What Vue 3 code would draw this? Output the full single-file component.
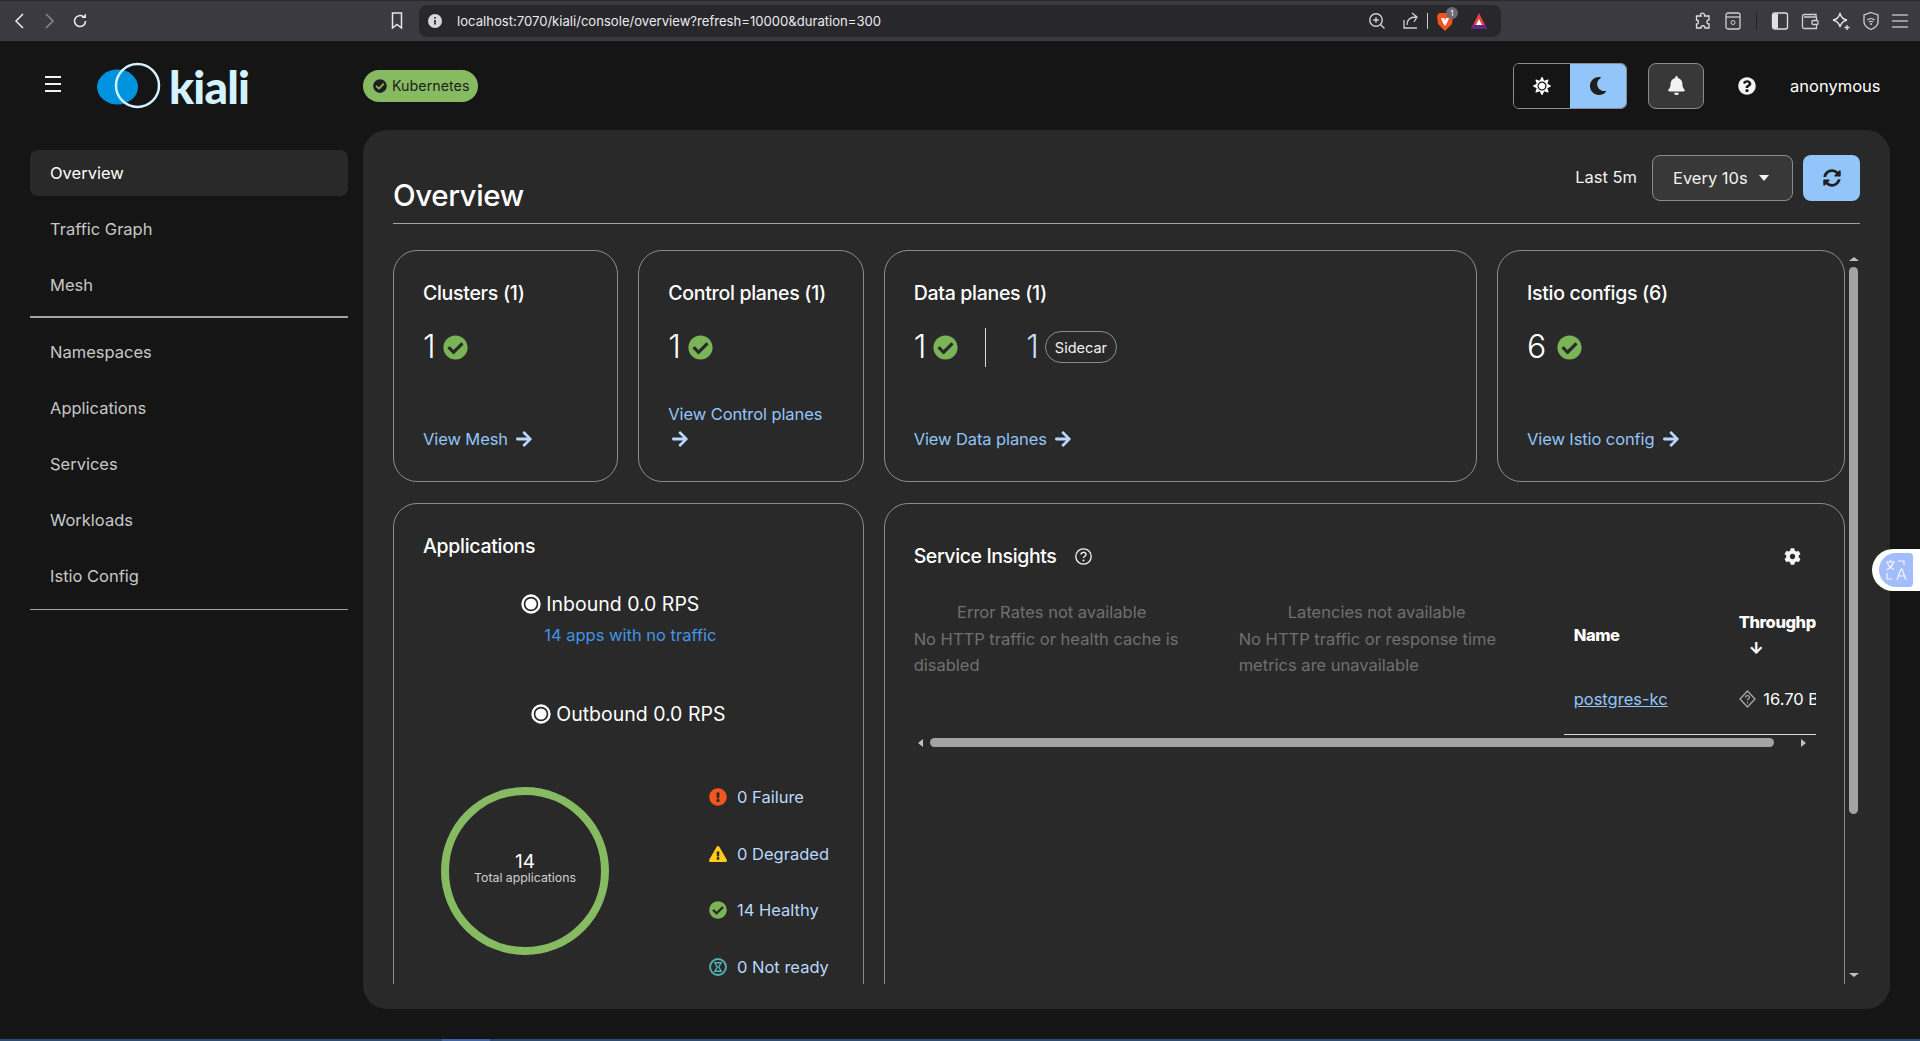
<template>
  <div class="page">
    <!-- browser toolbar -->
    <div class="browser-bar">
      <div class="nav-btns">
        <svg width="14" height="18" viewBox="0 0 14 18"><path d="M10 2 3 9l7 7" fill="none" stroke="#e8e8ea" stroke-width="1.6"/></svg>
        <svg width="14" height="18" viewBox="0 0 14 18"><path d="m4 2 7 7-7 7" fill="none" stroke="#85858a" stroke-width="1.6"/></svg>
        <svg width="18" height="18" viewBox="0 0 18 18"><path d="M14.5 9a5.5 5.5 0 1 1-2-4.2" fill="none" stroke="#e8e8ea" stroke-width="1.6"/><path d="M10.5 6h4.5V1.5z" fill="#e8e8ea"/></svg>
      </div>
      <svg class="bookmark" width="14" height="20" viewBox="0 0 14 20"><path d="M2.5 2h9v15L7 13.5 2.5 17z" fill="none" stroke="#e8e8ea" stroke-width="1.5"/></svg>
      <div class="url-bar">
        <svg width="16" height="16" viewBox="0 0 16 16"><circle cx="8" cy="8" r="7" fill="#d8d8da"/><path d="M8 7v4.5M8 4v1.6" stroke="#27272c" stroke-width="1.7"/></svg>
        <span class="url-text">localhost:7070/kiali/console/overview?refresh=10000&amp;duration=300</span>
        <div class="url-icons">
          <svg width="20" height="20" viewBox="0 0 20 20"><circle cx="9" cy="9" r="6.2" fill="none" stroke="#d0d0d2" stroke-width="1.4"/><path d="m13.5 13.5 4 4M9 6.2v5.6M6.2 9h5.6" stroke="#d0d0d2" stroke-width="1.4"/></svg>
          <svg class="share" width="20" height="20" viewBox="0 0 20 20"><path d="M3 9v8h13M6 14c0-5 3-8 9-8M11 2l5 4-3 5" fill="none" stroke="#d0d0d2" stroke-width="1.3"/></svg>
          <i class="url-sep"></i>
          <div class="brave">
            <svg width="16" height="19" viewBox="0 0 16 19"><path d="M2 1h12l2 3-1 8-7 7-7-7-1-8z" fill="#f1541f"/><path d="M4 6h3l1 2 1-2h3l-2 5-2 3-2-3z" fill="#fff"/></svg>
            <span class="brave-badge">1</span>
          </div>
          <svg class="tri" width="18" height="18" viewBox="0 0 18 18"><path d="M9 1 1 17h16z" fill="#e8403a"/><path d="M1 17h16l-2.5-4h-11z" fill="#5a2a86"/><path d="M9 7l-3 6h6z" fill="#fff"/></svg>
        </div>
      </div>
      <div class="tool-icons">
        <svg width="20" height="20" viewBox="0 0 20 20"><path d="M8 2.500c2-1 4 0 3.500 2.500H16v4c-2.500-.5-3 4 0 4v4h-4c.5-3-4.500-3-4 0H3.500v-4c2.500.5 2.500-4 0-4V5H8c-.5-1-.5-2 0-2.500z" fill="none" stroke="#e0e0e2" stroke-width="1.3"/></svg>
        <svg width="18" height="20" viewBox="0 0 18 20"><rect x="2" y="2" width="14" height="16" rx="2" fill="none" stroke="#d0d0d2" stroke-width="1.3"/><path d="M2 6h14" stroke="#d0d0d2" stroke-width="1.3"/><circle cx="9" cy="11.5" r="2" fill="none" stroke="#d0d0d2"/></svg>
        <i class="tool-sep"></i>
        <svg width="18" height="20" viewBox="0 0 18 20"><rect x="1.5" y="2" width="15" height="16" rx="2" fill="none" stroke="#e0e0e2" stroke-width="1.3"/><rect x="2" y="2.5" width="5" height="15" fill="#e0e0e2"/></svg>
        <svg width="20" height="20" viewBox="0 0 20 20"><path d="M16 5V3.500H4A1.500 1.500 0 0 0 2.500 5v11A1.500 1.500 0 0 0 4 17.500h12.500V6H4" fill="none" stroke="#d0d0d2" stroke-width="1.3"/><rect x="12" y="9.5" width="6" height="4" rx="1" fill="#3a3a40" stroke="#d0d0d2" stroke-width="1.3"/></svg>
        <svg width="20" height="20" viewBox="0 0 20 20"><path d="M9 2c1 5 3 6.500 7 7-4 1-6 2.500-7 7-1-4.500-3-6-7-7 4-.5 6-2 7-7z" fill="none" stroke="#e0e0e2" stroke-width="1.3"/><path d="M16 14v5M13.500 16.500h5" stroke="#e0e0e2" stroke-width="1.3"/></svg>
        <svg width="18" height="20" viewBox="0 0 18 20"><path d="M9 1.500 16 4v7c0 4-3.500 6-7 7.500C5.500 17 2 15 2 11V4z" fill="none" stroke="#d0d0d2" stroke-width="1.3"/><path d="M5.500 9c2-2 5-2 7 0M7 11c1-1 3-1 4 0" fill="none" stroke="#d0d0d2" stroke-width="1.2"/><circle cx="9" cy="13" r="1" fill="#d0d0d2"/></svg>
        <svg width="18" height="20" viewBox="0 0 18 20"><path d="M1 4h16M1 10h16M1 16h16" stroke="#b8b8bc" stroke-width="1.5"/></svg>
      </div>
    </div>

    <!-- kiali masthead -->
    <header class="masthead">
      <div class="hamburger"><i></i><i></i><i></i></div>
      <div class="logo">
        <svg width="66" height="48" viewBox="0 0 66 48"><ellipse cx="21.5" cy="25" rx="20.5" ry="17.5" fill="#0093dd"/><circle cx="41.5" cy="23.5" r="21.5" fill="none" stroke="#d3f4ff" stroke-width="2.5"/></svg>
        <span class="logo-text">kiali</span>
      </div>
      <div class="cluster-pill">
        <svg width="14" height="14" viewBox="0 0 512 512"><path :d="icons.check" fill="#1f1f1f"/></svg>
        Kubernetes
      </div>
      <div class="mast-right">
        <div class="theme-toggle">
          <button class="theme-btn">
            <svg width="18" height="18" viewBox="0 0 512 512"><path :d="icons.sun" fill="#fff"/></svg>
          </button>
          <button class="theme-btn on">
            <svg width="18" height="18" viewBox="0 0 512 512"><path :d="icons.moon" fill="#1f1f1f"/></svg>
          </button>
        </div>
        <button class="bell-btn">
          <svg width="17" height="19" viewBox="0 0 448 512"><path :d="icons.bell" fill="#f2f2f2"/></svg>
        </button>
        <svg class="help" width="18" height="18" viewBox="0 0 512 512"><path :d="icons.question" fill="#f4f4f4"/></svg>
        <span class="user">anonymous</span>
      </div>
    </header>

    <div class="body">
      <nav class="sidebar">
        <template v-for="(group, i) in navGroups" :key="i">
          <a v-for="item in group" :key="item" class="nav-item" :class="{ active: item === 'Overview' }">{{ item }}</a>
          <hr class="nav-sep" :class="{ thick: i === 0 }" />
        </template>
      </nav>

      <main class="panel">
        <div class="panel-head">
          <h1>Overview</h1>
          <div class="time-controls">
            <span class="last">Last 5m</span>
            <button class="refresh-select">Every 10s <i class="caret"></i></button>
            <button class="refresh-btn">
              <svg width="18" height="18" viewBox="0 0 512 512"><path :d="icons.sync" fill="#1f1f1f"/></svg>
            </button>
          </div>
        </div>

        <div class="scroll-area">
          <div class="cards">
            <section v-for="c in summaryCards" :key="c.title" class="card summary" :class="c.cls">
              <h2>{{ c.title }}</h2>
              <div class="stat">
                <span class="num">{{ c.count }}</span>
                <svg class="ok" width="25" height="25" viewBox="0 0 512 512"><path :d="icons.check" fill="#7ab457"/></svg>
                <template v-if="c.sidecar">
                  <i class="stat-sep"></i>
                  <span class="num tint">1</span>
                  <span class="label-pill">Sidecar</span>
                </template>
              </div>
              <a class="view-link">{{ c.link }} <svg class="arrow" width="16" height="18" viewBox="0 0 448 512"><path :d="icons.arrow" fill="#b9d8fb"/></svg></a>
            </section>

            <section class="card apps">
              <h2>Applications</h2>
              <div class="rps">
                <div class="rps-line">
                  <svg width="20" height="20" viewBox="0 0 20 20"><circle cx="10" cy="10" r="8.5" fill="none" stroke="#fff" stroke-width="2.4"/><circle cx="10" cy="10" r="5.6" fill="#fff"/></svg>
                  Inbound 0.0 RPS
                </div>
                <a class="no-traffic">14 apps with no traffic</a>
                <div class="rps-line out">
                  <svg width="20" height="20" viewBox="0 0 20 20"><circle cx="10" cy="10" r="8.5" fill="none" stroke="#fff" stroke-width="2.4"/><circle cx="10" cy="10" r="5.6" fill="#fff"/></svg>
                  Outbound 0.0 RPS
                </div>
              </div>
              <div class="health">
                <div class="donut">
                  <b>14</b>
                  <span>Total applications</span>
                </div>
                <ul class="legend">
                  <li>
                    <svg width="18" height="18" viewBox="0 0 512 512"><path :d="icons.failure" fill="#f0561d"/></svg>
                    0 Failure
                  </li>
                  <li>
                    <svg width="18" height="16" viewBox="0 0 576 512"><path :d="icons.warning" fill="#ffcc17"/></svg>
                    0 Degraded
                  </li>
                  <li>
                    <svg width="18" height="18" viewBox="0 0 512 512"><path :d="icons.check" fill="#7ab457"/></svg>
                    14 Healthy
                  </li>
                  <li>
                    <svg width="18" height="18" viewBox="0 0 17 17"><circle cx="8.5" cy="8.5" r="7.5" fill="none" stroke="#4fb3b3" stroke-width="1.8"/><path d="M5.500 4.500h6L9.200 8.500l2.300 4h-6l2.300-4z" fill="none" stroke="#4fb3b3" stroke-width="1.3"/></svg>
                    0 Not ready
                  </li>
                </ul>
              </div>
            </section>

            <section class="card insights">
              <div class="insights-head">
                <h2>Service Insights</h2>
                <svg width="17" height="17" viewBox="0 0 17 17"><circle cx="8.5" cy="8.5" r="7.7" fill="none" stroke="#f2f2f2" stroke-width="1.3"/><path d="M6 6.600c0-3 5-3 5-.2 0 1.800-2.500 1.800-2.500 3.600" fill="none" stroke="#f2f2f2" stroke-width="1.4"/><circle cx="8.5" cy="12.6" r="1" fill="#f2f2f2"/></svg>
                <svg class="gear" width="17" height="17" viewBox="0 0 512 512"><path :d="icons.cog" fill="#f4f4f4"/></svg>
              </div>
              <div class="insights-body">
                <div class="empty">
                  <div class="empty-title">Error Rates not available</div>
                  <div>No HTTP traffic or health cache is disabled</div>
                </div>
                <div class="empty">
                  <div class="empty-title">Latencies not available</div>
                  <div>No HTTP traffic or response time metrics are unavailable</div>
                </div>
                <div class="table-wrap">
                  <table>
                    <thead>
                      <tr>
                        <th class="col-name">Name</th>
                        <th class="col-tp">Throughput<br /><span class="sort">↓</span></th>
                      </tr>
                    </thead>
                    <tbody>
                      <tr>
                        <td><a class="svc-link">postgres-kc</a></td>
                        <td class="tp-cell">
                          <svg width="17" height="20" viewBox="0 0 17 18"><path d="M8.5 1 16 9l-7.500 8L1 9z" fill="none" stroke="#a8a8a8" stroke-width="1.3"/><path d="M6.500 7.500c0-2.500 4-2.500 4-.2 0 1.400-2 1.500-2 3M8.500 11.800v1.400" fill="none" stroke="#a8a8a8" stroke-width="1.2"/></svg>
                          16.70 B/s
                        </td>
                      </tr>
                    </tbody>
                  </table>
                </div>
              </div>
              <div class="hbar">
                <i class="tri-left"></i>
                <div class="hbar-thumb"></div>
                <i class="tri-right"></i>
              </div>
            </section>
          </div>
          <div class="vbar">
            <i class="tri-up"></i>
            <div class="vbar-thumb"></div>
            <i class="tri-down"></i>
          </div>
        </div>
      </main>
    </div>
    <div class="taskbar-edge"></div>

    <!-- floating translate widget -->
    <div class="translate">
      <div class="translate-inner">
        <svg width="24" height="24" viewBox="0 0 24 24"><path d="M2 4h9M6.500 2v2M9.500 4c-1 3.500-3 6-7 8M3.500 5c1 3 3 5 6.500 6.500M14 3h6v4M3 15v6h5" fill="none" stroke="#f4f7ff" stroke-width="1.2"/><path d="m13 22 4-11h1l4 11M14.500 18h6" fill="none" stroke="#f4f7ff" stroke-width="1.2"/></svg>
      </div>
    </div>
  </div>
</template>

<script setup>
const navGroups = [
  ['Overview', 'Traffic Graph', 'Mesh'],
  ['Namespaces', 'Applications', 'Services', 'Workloads', 'Istio Config']
]

const summaryCards = [
  { title: 'Clusters (1)', count: 1, link: 'View Mesh', cls: 'span2' },
  { title: 'Control planes (1)', count: 1, link: 'View Control planes', cls: 'span2' },
  { title: 'Data planes (1)', count: 1, link: 'View Data planes', cls: 'span5', sidecar: true },
  { title: 'Istio configs (6)', count: 6, link: 'View Istio config', cls: 'span3' }
]

const icons = {
  check: 'M504 256c0 136.967-111.033 248-248 248S8 392.967 8 256 119.033 8 256 8s248 111.033 248 248zM227.314 387.314l184-184c6.248-6.248 6.248-16.379 0-22.627l-22.627-22.627c-6.248-6.249-16.379-6.249-22.628 0L216 308.118l-70.059-70.059c-6.248-6.248-16.379-6.248-22.628 0l-22.627 22.627c-6.248 6.248-6.248 16.379 0 22.627l104 104c6.249 6.25 16.379 6.25 22.628.001z',
  sun: 'M256 160c-52.9 0-96 43.1-96 96s43.1 96 96 96 96-43.1 96-96-43.1-96-96-96zm246.4 80.5l-94.7-47.3 33.5-100.4c4.5-13.6-8.4-26.5-21.9-21.9l-100.4 33.5-47.4-94.8c-6.4-12.8-24.6-12.8-31 0l-47.3 94.7L92.7 70.8c-13.6-4.5-26.5 8.4-21.9 21.9l33.5 100.4-94.7 47.4c-12.8 6.4-12.8 24.6 0 31l94.7 47.3-33.5 100.5c-4.5 13.6 8.4 26.5 21.9 21.9l100.4-33.5 47.3 94.7c6.4 12.8 24.6 12.8 31 0l47.3-94.7 100.4 33.5c13.6 4.5 26.5-8.4 21.9-21.9l-33.5-100.4 94.7-47.3c13-6.5 13-24.7.2-31.1zm-155.9 106c-49.9 49.9-131.1 49.9-181 0-49.9-49.9-49.9-131.1 0-181 49.9-49.9 131.1-49.9 181 0 49.9 49.9 49.9 131.1 0 181z',
  moon: 'M283.211 512c78.962 0 151.079-35.925 198.857-94.792 7.068-8.708-.639-21.43-11.562-19.35-124.203 23.654-238.262-71.576-238.262-196.954 0-72.222 38.662-138.635 101.498-174.394 9.686-5.512 7.25-20.197-3.756-22.23A258.156 258.156 0 0 0 283.211 0c-141.309 0-256 114.511-256 256 0 141.309 114.511 256 256 256z',
  bell: 'M224 512c35.32 0 63.97-28.65 63.97-64H160.03c0 35.35 28.65 64 63.97 64zm215.39-149.71c-19.32-20.76-55.47-51.99-55.47-154.29 0-77.7-54.48-139.9-127.94-155.16V32c0-17.67-14.32-32-31.98-32s-31.98 14.33-31.98 32v20.84C118.56 68.1 64.08 130.3 64.08 208c0 102.3-36.15 133.53-55.47 154.29-6 6.45-8.66 14.16-8.61 21.71.11 16.4 12.98 32 32.1 32h383.8c19.12 0 32-15.6 32.1-32 .05-7.55-2.61-15.27-8.61-21.71z',
  question: 'M504 256c0 136.997-111.043 248-248 248S8 392.997 8 256C8 119.083 119.043 8 256 8s248 111.083 248 248zM262.655 90c-54.497 0-89.255 22.957-116.549 63.758-3.536 5.286-2.353 12.415 2.715 16.258l34.699 26.31c5.205 3.947 12.621 3.008 16.665-2.122 17.864-22.658 30.113-35.797 57.303-35.797 20.429 0 45.698 13.148 45.698 32.958 0 14.976-12.363 22.667-32.534 33.976C247.128 238.528 216 254.941 216 296v4c0 6.627 5.373 12 12 12h56c6.627 0 12-5.373 12-12v-1.333c0-28.462 83.186-29.647 83.186-106.667 0-58.002-60.165-102-116.531-102zM256 338c-25.365 0-46 20.635-46 46 0 25.364 20.635 46 46 46s46-20.636 46-46c0-25.365-20.635-46-46-46z',
  sync: 'M370.72 133.28C339.458 104.008 298.888 87.962 255.848 88c-77.458.068-144.328 53.178-162.791 126.85-1.344 5.363-6.122 9.15-11.651 9.15H24.103c-7.498 0-13.194-6.807-11.807-14.176C33.933 94.924 134.813 8 256 8c66.448 0 126.791 26.136 171.315 68.685L463.03 40.97C478.149 25.851 504 36.559 504 57.941V192c0 13.255-10.745 24-24 24H345.941c-21.382 0-32.09-25.851-16.971-40.971l41.75-41.749zM32 296h134.059c21.382 0 32.09 25.851 16.971 40.971l-41.75 41.75c31.262 29.273 71.835 45.319 114.876 45.28 77.418-.07 144.315-53.144 162.787-126.849 1.344-5.363 6.122-9.15 11.651-9.15h57.304c7.498 0 13.194 6.807 11.807 14.176C478.067 417.076 377.187 504 256 504c-66.448 0-126.791-26.136-171.315-68.685L48.97 471.03C33.851 486.149 8 475.441 8 454.059V320c0-13.255 10.745-24 24-24z',
  arrow: 'M190.5 66.9l22.2-22.2c9.4-9.4 24.6-9.4 33.9 0L441 239c9.4 9.4 9.4 24.6 0 33.9L246.6 467.3c-9.4 9.4-24.6 9.4-33.9 0l-22.2-22.2c-9.5-9.5-9.3-25 .4-34.3L311.4 296H24c-13.3 0-24-10.7-24-24v-32c0-13.3 10.7-24 24-24h287.4L190.9 101.2c-9.8-9.3-10-24.8-.4-34.3z',
  cog: 'M487.4 315.7l-42.6-24.6c4.3-23.2 4.3-47 0-70.2l42.6-24.6c4.9-2.8 7.1-8.6 5.5-14-11.1-35.6-30-67.8-54.7-94.6-3.8-4.1-10-5.1-14.8-2.3L380.8 110c-17.9-15.4-38.5-27.3-60.8-35.1V25.8c0-5.6-3.9-10.5-9.4-11.7-36.7-8.2-74.3-7.8-109.2 0-5.5 1.2-9.4 6.1-9.4 11.7V75c-22.2 7.9-42.8 19.8-60.8 35.1L88.7 85.5c-4.9-2.8-11-1.9-14.8 2.3-24.7 26.7-43.6 58.9-54.7 94.6-1.7 5.4.6 11.2 5.5 14L67.3 221c-4.3 23.2-4.3 47 0 70.2l-42.6 24.6c-4.9 2.8-7.1 8.6-5.5 14 11.1 35.6 30 67.8 54.7 94.6 3.8 4.1 10 5.1 14.8 2.3l42.6-24.6c17.9 15.4 38.5 27.3 60.8 35.1v49.2c0 5.6 3.9 10.5 9.4 11.7 36.7 8.2 74.3 7.8 109.2 0 5.5-1.2 9.4-6.1 9.4-11.7v-49.2c22.2-7.9 42.8-19.8 60.8-35.1l42.6 24.6c4.9 2.8 11 1.9 14.8-2.3 24.7-26.7 43.6-58.9 54.7-94.6 1.5-5.5-.7-11.3-5.6-14.1zM256 336c-44.1 0-80-35.9-80-80s35.9-80 80-80 80 35.9 80 80-35.9 80-80 80z',
  failure: 'M504 256c0 136.997-111.043 248-248 248S8 392.997 8 256C8 119.083 119.043 8 256 8s248 111.083 248 248zm-248 50c-25.405 0-46 20.595-46 46s20.595 46 46 46 46-20.595 46-46-20.595-46-46-46zm-43.673-165.346l7.418 136c.347 6.364 5.609 11.346 11.982 11.346h48.546c6.373 0 11.635-4.982 11.982-11.346l7.418-136c.375-6.874-5.098-12.654-11.982-12.654h-63.383c-6.884 0-12.356 5.78-11.981 12.654z',
  warning: 'M569.517 440.013C587.975 472.007 564.806 512 527.94 512H48.054c-36.937 0-59.999-40.055-41.577-71.987L246.423 23.985c18.467-32.009 64.72-31.951 83.154 0l239.94 416.028zM288 354c-25.405 0-46 20.595-46 46s20.595 46 46 46 46-20.595 46-46-20.595-46-46-46zm-43.673-165.346l7.418 136c.347 6.364 5.609 11.346 11.982 11.346h48.546c6.373 0 11.635-4.982 11.982-11.346l7.418-136c.375-6.874-5.098-12.654-11.982-12.654h-63.383c-6.884 0-12.356 5.78-11.981 12.654z'
}
</script>

<style>
html, body { margin: 0; background: #151515; }
</style>

<style scoped>
* { box-sizing: border-box; }

.page {
  position: relative;
  width: 1920px;
  height: 1041px;
  overflow: hidden;
  display: flex;
  flex-direction: column;
  background: #151515;
  color: #fff;
  font-family: Inter, "Noto Sans", sans-serif;
  font-size: 16.5px;
}

/* browser toolbar */
.browser-bar {
  height: 41px;
  flex: none;
  display: flex;
  align-items: center;
  padding-right: 11px;
  background: #3a3a40;
  border-top: 1px solid #2a2a2e;
}
.nav-btns { display: flex; align-items: center; gap: 15px; margin-left: 13px; width: 377px; }
.bookmark { flex: none; margin-right: 15px; }
.url-bar {
  width: 1082px;
  height: 32px;
  flex: none;
  display: flex;
  align-items: center;
  padding: 0 8px;
  background: #27272c;
  border-radius: 8px;
}
.url-text { margin-left: 14px; font-size: 13.1px; color: #ebebed; }
.url-icons { margin-left: auto; display: flex; align-items: center; }
.share { margin-left: 14px; }
.url-sep { width: 1px; height: 16px; background: #c8c8ca; margin: 0 9px 0 6px; }
.brave { position: relative; display: flex; }
.brave-badge {
  position: absolute;
  top: -5px;
  left: 9px;
  width: 12px;
  height: 12px;
  border-radius: 50%;
  background: #6b6b73;
  font-size: 8px;
  line-height: 12px;
  text-align: center;
}
.tri { margin: 0 5px 0 17px; }
.tool-icons { margin-left: auto; display: flex; align-items: center; gap: 11px; }
.tool-sep { width: 1px; height: 18px; background: #222; margin: 0 3px; }

/* masthead */
.masthead {
  height: 89px;
  flex: none;
  display: flex;
  align-items: center;
  padding-left: 45px;
}
.hamburger { width: 16px; display: flex; flex-direction: column; gap: 5.5px; margin-top: -3px; }
.hamburger i { display: block; height: 1.5px; background: #f2f2f2; }
.logo { display: flex; align-items: center; margin-left: 35px; width: 267px; }
.logo-text {
  margin-left: 7px;
  margin-top: 3px;
  font-family: Lato, sans-serif;
  font-weight: 900;
  font-size: 46px;
  line-height: 1;
  letter-spacing: -.8px;
  color: #d3f4ff;
}
.cluster-pill {
  width: 115px;
  height: 32px;
  display: flex;
  align-items: center;
  gap: 5px;
  padding-left: 10px;
  border-radius: 16px;
  background: #87bb62;
  color: #1f1f1f;
  font-size: 14.3px;
}
.mast-right { margin-left: auto; display: flex; align-items: center; padding-right: 40px; }
.theme-toggle { display: flex; height: 46px; width: 114px; border: 1px solid #8a8d90; border-radius: 6px; overflow: hidden; }
.theme-btn { flex: 1; border: 0; background: #151515; display: flex; align-items: center; justify-content: center; padding: 0; }
.theme-btn.on { background: #92c5f9; }
.bell-btn {
  width: 56px;
  height: 46px;
  margin-left: 21px;
  border: 1px solid #8a8d90;
  border-radius: 8px;
  background: #383838;
  display: flex;
  align-items: center;
  justify-content: center;
  padding: 0;
}
.help { margin-left: 34px; }
.user { margin-left: 34px; color: #fff; width: 90px; white-space: nowrap; }

/* layout */
.body { flex: 1; display: flex; min-height: 0; padding-bottom: 30px; }
.sidebar { width: 363px; flex: none; padding: 20px 15px 0 30px; }
.nav-item {
  display: flex;
  align-items: center;
  height: 46px;
  margin-bottom: 10px;
  padding-left: 20px;
  color: #c7c7c7;
  border-radius: 8px;
}
.nav-item.active { background: #292929; color: #fff; }
.nav-sep { margin: 1px 0 11px; border: 0; border-top: 1px solid #a3a3a3; }
.nav-sep.thick { border-top-width: 2px; margin-top: -2px; margin-bottom: 11px; }
.panel {
  width: 1527px;
  flex: none;
  display: flex;
  flex-direction: column;
  padding: 25px 30px;
  background: #292929;
  border-radius: 24px;
}

.panel-head {
  height: 69px;
  flex: none;
  display: flex;
  justify-content: space-between;
  border-bottom: 1px solid #a3a3a3;
}
h1 { margin: 23px 0 0; font-size: 29.5px; line-height: 34px; font-weight: 500; letter-spacing: -.4px; }
.time-controls { display: flex; align-items: flex-start; }
.last { margin-top: 12px; margin-right: 15px; color: #f2f2f2; }
.refresh-select {
  width: 141px;
  height: 46px;
  margin-right: 10px;
  display: flex;
  align-items: center;
  gap: 11px;
  padding: 0 0 0 20px;
  border: 1px solid #8a8d90;
  border-radius: 8px;
  background: #383838;
  color: #f2f2f2;
  font: inherit;
  white-space: nowrap;
}
.caret { border: 5px solid transparent; border-top: 6px solid #f2f2f2; border-bottom: 0; }
.refresh-btn {
  width: 57px;
  height: 46px;
  border: 0;
  border-radius: 8px;
  background: #92c5f9;
  display: flex;
  align-items: center;
  justify-content: center;
  padding: 0;
}

.scroll-area { flex: 1; min-height: 0; display: flex; margin-top: 26px; }
.cards {
  width: 1452px;
  flex: none;
  height: 734px;
  overflow: hidden;
  display: grid;
  grid-template-columns: repeat(12, 1fr);
  grid-template-rows: 232px 600px;
  gap: 21px 20px;
}
.card {
  border: 1px solid #8a8d90;
  border-radius: 24px;
  padding: 29px;
  display: flex;
  flex-direction: column;
}
.span2 { grid-column: span 2; }
.span3 { grid-column: span 3; }
.span5 { grid-column: span 5; }
.span3 .ok { margin-left: 11px; }
h2 { margin: 0; font-size: 19.5px; line-height: 26px; font-weight: 500; letter-spacing: -.3px; white-space: nowrap; }

.stat { display: flex; align-items: center; height: 40px; margin-top: 21px; }
.num { font-size: 32px; font-weight: 300; line-height: 40px; }
.ok { margin-left: 7px; }
.stat-sep { width: 1px; height: 39px; background: #d8d8d8; margin: 0 26px 0 27px; }
.tint { color: #c7dffa; margin-left: 14px; margin-right: 6px; }
.label-pill {
  height: 32px;
  padding: 0 9px;
  display: flex;
  align-items: center;
  border: 1px solid #8a8d90;
  border-radius: 16px;
  font-size: 14.5px;
  color: #f2f2f2;
}
.view-link { margin-top: auto; color: #92c5f9; line-height: 25px; letter-spacing: -.1px; }
.arrow { margin-left: 4px; vertical-align: -3px; }

/* applications */
.apps { grid-column: span 4; padding-top: 29px; }
.rps { display: flex; flex-direction: column; align-items: center; }
.rps-line { display: flex; align-items: center; gap: 5px; font-size: 19.5px; line-height: 26px; }
.rps-line:first-child { margin-top: 32px; margin-left: -36px; }
.rps-line.out { margin-top: 53px; margin-left: 0; }
.no-traffic { margin-top: 5px; margin-left: 4px; color: #4394e5; line-height: 26px; }
.health { display: flex; margin-top: 57px; }
.donut {
  width: 168px;
  height: 168px;
  margin: 3px 0 0 18px;
  flex: none;
  border: 8px solid #87bb62;
  border-radius: 50%;
  display: flex;
  flex-direction: column;
  align-items: center;
  justify-content: center;
}
.donut b { font-size: 19px; font-weight: 400; line-height: 18px; margin-top: -4px; }
.donut span { font-size: 12.3px; line-height: 14px; color: #d0d0d0; white-space: nowrap; }
.legend { list-style: none; margin: 0; padding: 0 0 0 100px; display: flex; flex-direction: column; gap: 30.5px; color: #b9d8fb; white-space: nowrap; }
.legend li { display: flex; align-items: center; gap: 10px; height: 26px; }

/* service insights */
.insights { grid-column: span 8; padding: 39px 29px 0; }
.insights-head { display: flex; align-items: center; gap: 19px; height: 26px; }
.insights-head h2 { letter-spacing: -.4px; }
.gear { margin-left: auto; margin-right: 14px; }
.insights-body { display: flex; gap: 49px; margin-top: 30px; height: 136px; width: 902px; overflow: hidden; }
.empty { width: 276px; flex: none; color: #707070; line-height: 26.5px; }
.empty-title { text-align: center; }
.table-wrap { width: 252px; flex: none; overflow: hidden; border-bottom: 1px solid #d8d8d8; }
table { width: 330px; border-collapse: collapse; table-layout: fixed; font-size: 16.5px; }
th { text-align: left; font-weight: 800; letter-spacing: -.4px; height: 71px; padding: 0 10px; line-height: 26px; color: #fff; }
.col-name { width: 165px; }
.sort { display: inline-block; margin-left: 10px; font-size: 16px; font-weight: 800; }
td { padding: 0 10px 8px; height: 65px; }
.svc-link { color: #92c5f9; text-decoration: underline; }
.tp-cell { white-space: nowrap; }
.tp-cell svg { vertical-align: -4px; margin-right: 3px; }
.hbar { display: flex; align-items: center; width: 902px; height: 9px; margin-top: 3px; padding-left: 4px; }
.hbar-thumb { width: 844px; height: 9px; margin-left: 7px; background: #a3a3a3; border-radius: 5px; }
.tri-left { border: 4px solid transparent; border-right: 5px solid #c0c0c0; border-left: 0; }
.tri-right { border: 4px solid transparent; border-left: 5px solid #c0c0c0; border-right: 0; margin-left: 27px; }

/* vertical scrollbar */
.vbar { width: 15px; height: 734px; padding: 7px 0 0 2px; display: flex; flex-direction: column; align-items: center; }
.vbar-thumb { width: 9px; height: 547px; margin-top: 6px; background: #a3a3a3; border-radius: 5px; }
.tri-up { border: 5px solid transparent; border-bottom: 4px solid #c0c0c0; border-top: 0; }
.tri-down { border: 5px solid transparent; border-top: 4px solid #c0c0c0; border-bottom: 0; margin-top: auto; margin-bottom: 7px; }

.taskbar-edge {
  height: 2px;
  flex: none;
  background: linear-gradient(90deg, #2a4a72 0 442px, #3f64a6 442px 490px, #2a4a72 490px);
}

.translate {
  position: absolute;
  top: 549px;
  right: 0;
  width: 48px;
  height: 42px;
  padding: 4px 0 4px 7px;
  background: #fff;
  border-radius: 21px 0 0 21px;
}
.translate-inner {
  width: 34px;
  height: 34px;
  background: #a3bcfb;
  border-radius: 17px 4px 4px 17px;
  display: flex;
  align-items: center;
  justify-content: center;
}
</style>
